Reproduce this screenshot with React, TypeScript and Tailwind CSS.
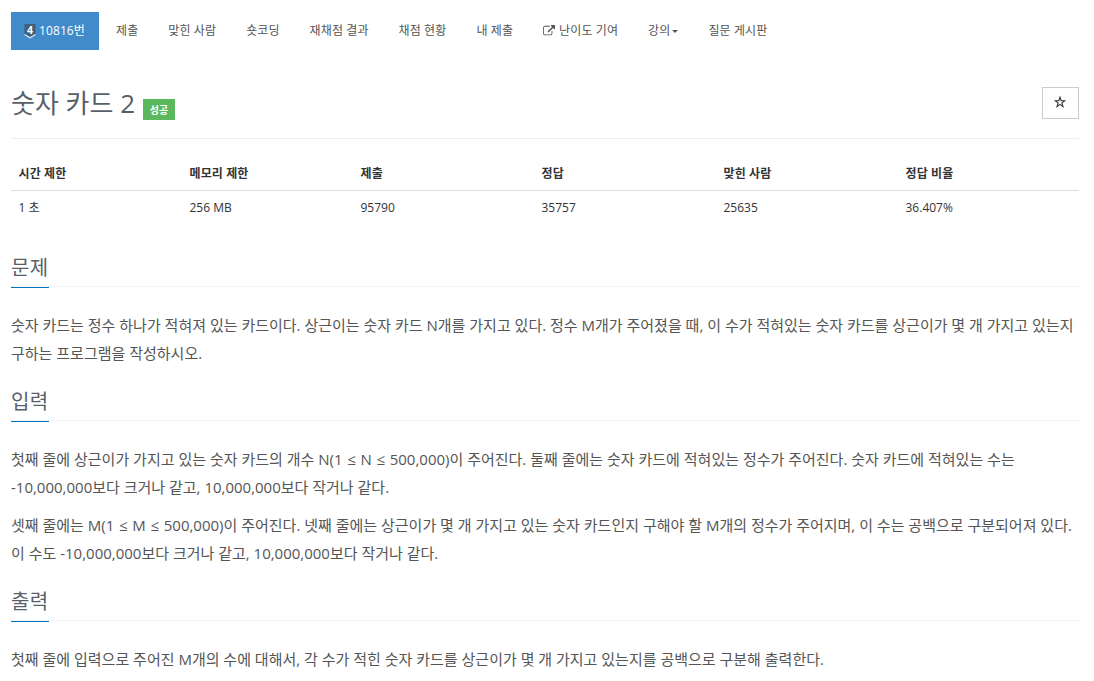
const navItems = ["제출", "맞힌 사람", "숏코딩", "재채점 결과", "채점 현황", "내 제출"];

const stats = [
  { label: "시간 제한", value: "1 초", width: "w-[171px]" },
  { label: "메모리 제한", value: "256 MB", width: "w-[171px]" },
  { label: "제출", value: "95790", width: "w-[181px]" },
  { label: "정답", value: "35757", width: "w-[182px]" },
  { label: "맞힌 사람", value: "25635", width: "w-[182px]" },
  { label: "정답 비율", value: "36.407%", width: "w-[181px]" },
];

const sections = [
  {
    title: "문제",
    paragraphs: [
      ["숫자 카드는 정수 하나가 적혀져 있는 카드이다. 상근이는 숫자 카드 N개를 가지고 있다. 정수 M개가 주어졌을 때, 이 수가 적혀있는 숫자 카드를 상근이가 몇 개 가지고 있는지", "구하는 프로그램을 작성하시오."],
    ],
  },
  {
    title: "입력",
    paragraphs: [
      ["첫째 줄에 상근이가 가지고 있는 숫자 카드의 개수 N(1 ≤ N ≤ 500,000)이 주어진다. 둘째 줄에는 숫자 카드에 적혀있는 정수가 주어진다. 숫자 카드에 적혀있는 수는", "-10,000,000보다 크거나 같고, 10,000,000보다 작거나 같다."],
      ["셋째 줄에는 M(1 ≤ M ≤ 500,000)이 주어진다. 넷째 줄에는 상근이가 몇 개 가지고 있는 숫자 카드인지 구해야 할 M개의 정수가 주어지며, 이 수는 공백으로 구분되어져 있다.", "이 수도 -10,000,000보다 크거나 같고, 10,000,000보다 작거나 같다."],
    ],
  },
  {
    title: "출력",
    paragraphs: [
      ["첫째 줄에 입력으로 주어진 M개의 수에 대해서, 각 수가 적힌 숫자 카드를 상근이가 몇 개 가지고 있는지를 공백으로 구분해 출력한다."],
    ],
  },
];

const TierBadge = () => (
  <svg viewBox="0 0 12 15" className="w-3 h-[15px] mr-[3px] overflow-visible">
    <path d="M0.5 0h11v10L6 13 0.5 10z" fill="#435f7a" />
    <path d="M0.5 10.6L6 13.8l5.5-3.2" fill="none" stroke="#dfe8f0" strokeWidth="1.2" />
    <text x="6" y="9.5" textAnchor="middle" fontSize="10.5" fontWeight="700" fill="#fff">4</text>
  </svg>
);

const ExternalLinkIcon = () => (
  <svg viewBox="0 0 1792 1792" className="size-3" fill="currentColor">
    <path d="M1408 928v320q0 119-84.5 203.5t-203.5 84.5h-832q-119 0-203.5-84.5t-84.5-203.5v-832q0-119 84.5-203.5t203.5-84.5h704q14 0 23 9t9 23v64q0 14-9 23t-23 9h-704q-66 0-113 47t-47 113v832q0 66 47 113t113 47h832q66 0 113-47t47-113v-320q0-14 9-23t23-9h64q14 0 23 9t9 23zm384-864v512q0 26-19 45t-45 19-45-19l-176-176-652 652q-10 10-23 10t-23-10l-114-114q-10-10-10-23t10-23l652-652-176-176q-19-19-19-45t19-45 45-19h512q26 0 45 19t19 45z" />
  </svg>
);

const StarIcon = () => (
  <svg viewBox="0 0 12 12" className="size-3 -translate-x-px -translate-y-px" fill="none" stroke="#333" strokeWidth="1.1">
    <path d="M6 1.2l1.2 3.5h3.7L7.9 6.9 9 10.6 6 8.4l-3 2.2 1.1-3.7-3-2.2h3.7z" />
  </svg>
);

// The comparison sign gets a little more room than its glyph has
const Line = ({ text }: { text: string }) => (
  <span className="block">
    {text.split("≤").map((part, i) => (
      <span key={i}>
        {i > 0 && <span className="px-[0.8px]">≤</span>}
        {part}
      </span>
    ))}
  </span>
);

const App = () => (
  <div className="h-[681px] bg-white pl-[11px] pr-[15px] pt-3 text-xs text-[#333] font-['Open_Sans','Noto_Sans_CJK_KR',sans-serif]">
    <nav className="flex h-[38px] items-center whitespace-nowrap text-[#555]">
      <a className="flex h-[38px] w-[88px] items-center bg-[#428bca] pl-[13px] tracking-[0.1px] text-white">
        <TierBadge />
        10816번
      </a>
      <div className="flex gap-[30px] pl-[17px] tracking-[0.11px]">
        {navItems.map((item) => (
          <a key={item}>{item}</a>
        ))}
        <a className="flex items-center gap-1">
          <ExternalLinkIcon />
          난이도 기여
        </a>
        <a className="flex items-center gap-[2px]">
          강의
          <span className="border-x-[3px] border-t-[3px] border-x-transparent border-t-[#555]" />
        </a>
        <a>질문 게시판</a>
      </div>
    </nav>

    <header className="mt-[27px] flex h-[62px] items-start justify-between border-b border-[#eee]">
      <h1 className="flex text-[26px] leading-[52px] text-[#585f69]">
        숫자 카드 2
        <span className="ml-2 mt-[22px] h-[21px] w-8 bg-[#5cb85c] text-center text-[10px] font-bold leading-[22px] text-white">
          성공
        </span>
      </h1>
      <button className="mt-[10px] flex h-8 w-[37px] items-center justify-center border border-[#ccc]">
        <StarIcon />
      </button>
    </header>

    <table className="mt-[18px] w-full table-fixed text-left">
      <thead>
        <tr className="h-[33px] border-b border-[#ddd]">
          {stats.map((stat) => (
            <th key={stat.label} className={`${stat.width} pl-[7.5px] pt-px font-bold tracking-[0.1px]`}>
              {stat.label}
            </th>
          ))}
        </tr>
      </thead>
      <tbody>
        <tr className="h-[35px]">
          {stats.map((stat) => (
            <td key={stat.label} className="pl-[7.5px]">
              {stat.value}
            </td>
          ))}
        </tr>
      </tbody>
    </table>

    <main className="mt-[26px]">
      {sections.map((section) => (
        <section key={section.title} className="mb-[18px] last:mb-0">
          <div className="mb-6 h-9 border-b border-dotted border-[#e4e7ee]">
            <h2 className="inline-block h-[37px] w-[38px] border-b border-[#0076c0] text-xl leading-[34px] tracking-[0.3px] text-[#585f69]">
              {section.title}
            </h2>
          </div>
          {section.paragraphs.map((lines) => (
            <p key={lines[0]} className="mb-[10px] whitespace-nowrap text-[15px] leading-7 text-[#555]">
              {lines.map((line) => (
                <Line key={line} text={line} />
              ))}
            </p>
          ))}
        </section>
      ))}
    </main>
  </div>
);

export default App;
